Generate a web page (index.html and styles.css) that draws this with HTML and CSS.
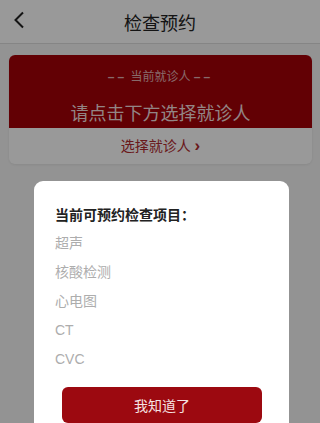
FILE: index.html
```html
<!DOCTYPE html>
<html lang="zh-CN">
  <head>
    <meta charset="UTF-8" />
    <meta name="viewport" content="width=device-width, initial-scale=1.0" />
    <title>检查预约</title>
    <link rel="stylesheet" href="styles.css">
  </head>
  <body>
    <header class="nav">
      <span class="nav__back">
        <svg width="12" height="18" viewBox="0 0 12 18"><path d="M10 1.5 L2.5 9 L10 16.5" fill="none" stroke="#222" stroke-width="2" /></svg>
      </span>
      <h1 class="nav__title">检查预约</h1>
    </header>

    <main class="page">
      <section class="patient">
        <div class="patient__top">
          <p class="patient__label"><span class="dash">&ndash;&ndash;</span> 当前就诊人 <span class="dash">&ndash;&ndash;</span></p>
          <p class="patient__tip">请点击下方选择就诊人</p>
        </div>
        <div class="patient__select">选择就诊人 <span class="arrow">&#x203A;</span></div>
      </section>
    </main>

    <!-- 遮罩 + 弹窗 -->
    <div class="mask"></div>
    <div class="dialog">
      <h3 class="dialog__title">当前可预约检查项目：</h3>
      <ul class="dialog__list">
        <li>超声</li>
        <li>核酸检测</li>
        <li>心电图</li>
        <li>CT</li>
        <li>CVC</li>
      </ul>
      <button class="dialog__btn">我知道了</button>
    </div>
  </body>
</html>
```

FILE: styles.css
```css
* {
  margin: 0;
  padding: 0;
  box-sizing: border-box;
}

body {
  font-family: "Liberation Sans", "Noto Sans CJK SC", sans-serif;
  background-color: #f6f6f6;
  color: #333;
  height: 423px;
  overflow: hidden;
}

.nav {
  height: 44px;
  background-color: #fff;
  border-bottom: 1px solid #dedede;
  display: flex;
  align-items: center;
  justify-content: center;
  position: relative;
}

.nav__back {
  position: absolute;
  left: 13px;
  top: 11px;
}

.nav__title {
  font-size: 18px;
  font-weight: normal;
  color: #222;
}

.page {
  padding: 11px 8px 0 9px;
}

.patient {
  background-color: #fff;
  border-radius: 6px;
  overflow: hidden;
  box-shadow: 0 1px 3px rgba(0, 0, 0, 0.08);
}

.patient__top {
  background-color: #a30008;
  height: 73px;
  text-align: center;
  color: #f3dede;
  padding-top: 12px;
}

.patient__label {
  font-size: 12px;
  opacity: 0.8;
}

.dash {
  letter-spacing: 3px;
  font-weight: bold;
}

.patient__tip {
  font-size: 18px;
  margin-top: 15px;
}

.patient__select {
  height: 36px;
  line-height: 36px;
  text-align: center;
  font-size: 14px;
  color: #b02a2e;
}

.arrow {
  font-size: 17px;
  font-weight: bold;
}

.mask {
  position: absolute;
  inset: 0;
  background-color: rgba(0, 0, 0, 0.4);
}

.dialog {
  position: absolute;
  left: 34px;
  top: 181px;
  width: 255px;
  height: 260px;
  background-color: #fff;
  border-radius: 9px;
  padding: 23px 21px 0 21px;
}

.dialog__title {
  font-size: 14px;
  font-weight: bold;
  color: #222;
}

.dialog__list {
  list-style: none;
  margin-top: 5px;
}

.dialog__list li {
  font-size: 14px;
  color: #adadad;
  line-height: 29px;
}

.dialog__btn {
  display: block;
  width: 200px;
  height: 36px;
  margin: 13px 0 0 7px;
  border: none;
  border-radius: 6px;
  background-color: #9c0910;
  color: #f5e3e3;
  font-family: inherit;
  font-size: 14px;
}
```
